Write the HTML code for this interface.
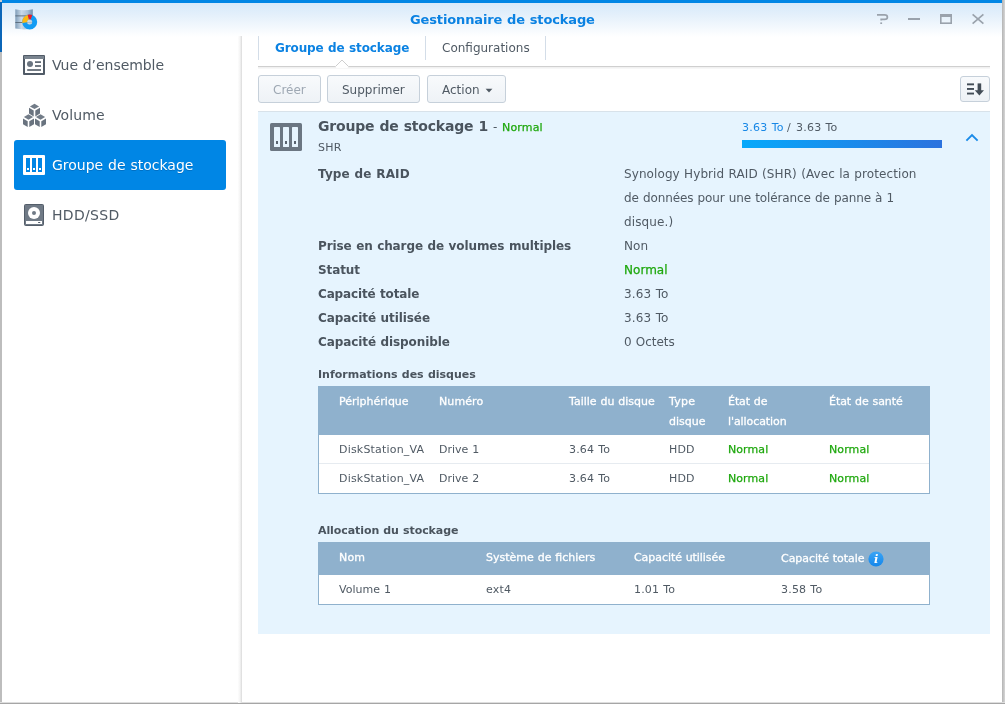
<!DOCTYPE html>
<html lang="fr"><head><meta charset="utf-8"><title>Gestionnaire de stockage</title>
<style>
html,body{margin:0;padding:0;}
body{width:1005px;height:704px;overflow:hidden;position:relative;background:#cfcfcf;font-family:"DejaVu Sans","Liberation Sans",sans-serif;font-size:12px;color:#505a64;word-spacing:0.4px;}
.abs,.t,svg{position:absolute;}
.t{white-space:nowrap;line-height:1;}
#win{left:2px;top:0;width:1000px;height:703px;background:#fff;}
#hdr{left:2px;top:3px;width:1000px;height:34px;background:linear-gradient(#d6e9fa 0,#e6f1fb 40%,#ffffff 100%);}
#topbar{left:2px;top:0;width:1000px;height:3px;background:#0086e5;}
#leftblue{left:0;top:2px;width:2px;height:50px;background:#0b66b8;}
#leftgray{left:0;top:52px;width:2px;height:652px;background:#bdbdbd;}
#rightgray{left:1002px;top:0;width:3px;height:704px;background:linear-gradient(90deg,#b4b4b4,#d6d6d6);}
#botgray{left:0;top:702px;width:1005px;height:2px;background:linear-gradient(#dedede 0,#dedede 50%,#a6a6a6 50%);}
#sidediv{left:238px;top:36px;width:4px;height:667px;background:linear-gradient(90deg,#fdfdfd 0,#f6f6f6 40%,#ebebeb 70%,#d9d9d9 100%);}
#active{left:14px;top:140px;width:212px;height:50px;background:#0086e5;border-radius:3px;}
.side{font-size:14px;color:#505a64;left:52px;}
.b{font-weight:bold;}
#panel{left:258px;top:111px;width:732px;height:523px;background:#e6f4fe;border-top:1px solid #d8e2ea;box-sizing:border-box;}
#tabline{left:258px;top:66px;width:732px;height:3px;background:linear-gradient(#cfcfcf 0,#cfcfcf 33%,#eeeeee 33%,#fafafa 100%);}
.sep{width:1px;top:36px;height:24px;background:#d3dde8;}
.btn{top:75px;height:26px;border:1px solid #c6d0da;border-radius:3px;background:linear-gradient(#f8fafc,#eef2f6);}
.btn .t{top:8px;font-size:12px;color:#505a64;}
.lbl{font-size:12px;font-weight:bold;color:#4a545e;left:318px;}
.val{font-size:12px;color:#505a64;left:624px;}
.th{font-size:11px;color:#fff;-webkit-text-stroke:0.3px #fff;}
.td{font-size:11px;color:#505a64;}
.g{color:#1fa80e !important;-webkit-text-stroke:0.25px #1fa80e;}
.thead{background:#8fb1cd;}
.tbody{background:#fff;border:1px solid #8fb1cd;border-top:none;box-sizing:border-box;}
#root{position:absolute;left:0;top:0;width:1005px;height:704px;will-change:transform;}
</style></head><body>
<div id="root">
<div id="win" class="abs"></div>
<div id="hdr" class="abs"></div>
<div id="topbar" class="abs"></div>
<div id="leftblue" class="abs"></div>
<div id="leftgray" class="abs"></div>
<div id="rightgray" class="abs"></div>
<div id="botgray" class="abs"></div>
<div id="sidediv" class="abs"></div>

<!-- app icon -->
<svg id="appicon" style="left:14px;top:7px" width="26" height="26" viewBox="0 0 26 26">
<defs><linearGradient id="cyl" x1="0" x2="1" y1="0" y2="0"><stop offset="0" stop-color="#7f9db8"/><stop offset="0.35" stop-color="#c9d9e8"/><stop offset="0.7" stop-color="#a9c0d6"/><stop offset="1" stop-color="#6f8fae"/></linearGradient></defs>
<path d="M1.3 2.2 Q10 4.2 18.8 2.2 L18.8 21.6 Q10 23.2 1.3 21.6 Z" fill="url(#cyl)"/>
<rect x="1.3" y="8.5" width="17.5" height="0.8" fill="#4f5f6f"/>
<rect x="1.3" y="15" width="17.5" height="0.8" fill="#4f5f6f"/>
<circle cx="15.7" cy="15" r="5" fill="none" stroke="#129cf4" stroke-width="5"/>
<path d="M10.74 15.6 A5 5 0 0 1 14.3 10.2" fill="none" stroke="#fdb813" stroke-width="5"/>
<path d="M14.3 10.2 A5 5 0 0 1 17.43 10.31" fill="none" stroke="#ee1c25" stroke-width="5"/>
<circle cx="15.7" cy="15" r="2.5" fill="#e8f1f8" opacity="0.6"/>
</svg>

<span id="title" class="t b" style="left:410px;top:13px;font-size:13px;color:#0b82e2;letter-spacing:-0.13px;">Gestionnaire de stockage</span>

<!-- window controls -->
<svg style="left:870px;top:8px" width="120" height="22" viewBox="0 0 120 22" fill="none" stroke="#9aa2ac" stroke-width="1.8">
<path d="M7 6.9 H14.5 Q17.4 6.9 17.4 9.2 Q17.4 11.4 14.5 11.4 H11.2 V12.6" stroke-width="1.7"/>
<rect x="10.3" y="14.4" width="1.8" height="1.6" fill="#9aa2ac" stroke="none"/>
<path d="M38 11 H50" stroke-width="2"/>
<rect x="70.8" y="7.4" width="10.4" height="7.8" stroke-width="1.6"/>
<rect x="70" y="6" width="12" height="3" fill="#9aa2ac" stroke="none"/>
<path d="M102.6 6.4 L113.4 15.6 M113.4 6.4 L102.6 15.6" stroke-width="1.7"/>
</svg>

<!-- sidebar -->
<div id="active" class="abs"></div>
<svg style="left:23px;top:55px" width="22" height="20" viewBox="0 0 22 20">
<rect x="0" y="0" width="22" height="20" rx="1" fill="#515b67"/>
<rect x="1" y="1" width="20" height="3" fill="#7a848f"/>
<rect x="2" y="4" width="18" height="14" fill="#fff"/>
<circle cx="7" cy="9" r="3" fill="#6b7581"/>
<rect x="12" y="6.3" width="6" height="1.6" fill="#515b67"/>
<rect x="12" y="10.2" width="6" height="1.6" fill="#515b67"/>
<rect x="4.2" y="14.2" width="13.8" height="1.6" fill="#515b67"/>
</svg>
<svg style="left:23px;top:103px" width="24" height="25" viewBox="0 0 24 25">
<defs><g id="cube"><path d="M5.5 0 L10.1 2.7 L5.5 5.4 L0.9 2.7 Z" fill="#727c88"/><path d="M0 4.1 L4.7 6.9 L4.7 12.7 L0 9.9 Z" fill="#69737f"/><path d="M6.3 6.9 L11 4.1 L11 9.9 L6.3 12.7 Z" fill="#69737f"/></g></defs>
<use href="#cube" x="6" y="0.7"/><use href="#cube" x="0" y="11.3"/><use href="#cube" x="12" y="11.3"/>
</svg>
<svg style="left:23px;top:155px" width="22" height="20" viewBox="0 0 22 20">
<rect x="0" y="0" width="22" height="20" rx="1" fill="#fff"/>
<rect x="3" y="3" width="4" height="14" fill="#0086e5"/><rect x="9" y="3" width="4" height="14" fill="#0086e5"/><rect x="15" y="3" width="4" height="14" fill="#0086e5"/>
<rect x="4" y="13" width="2" height="2" fill="#fff"/><rect x="10" y="13" width="2" height="2" fill="#fff"/><rect x="16" y="13" width="2" height="2" fill="#fff"/>
</svg>
<svg style="left:24px;top:204px" width="20" height="22" viewBox="0 0 20 22">
<rect x="0.5" y="0.5" width="19" height="21" rx="1" fill="#707a86" stroke="#545e6a"/>
<circle cx="10" cy="9" r="6" fill="#fff"/><circle cx="10" cy="9" r="2" fill="#707a86"/>
<rect x="2" y="17" width="16" height="3" fill="#fff"/><rect x="14" y="18" width="2.4" height="1" rx="0.5" fill="#545e6a"/>
</svg>
<span id="s1" class="t side" style="top:58px;letter-spacing:-0.05px;">Vue d’ensemble</span>
<span id="s2" class="t side" style="top:108px;letter-spacing:0.10px;">Volume</span>
<span id="s3" class="t side" style="top:158px;color:#fff;text-shadow:0 1px 0 #0070c4;">Groupe de stockage</span>
<span id="s4" class="t side" style="top:208px;letter-spacing:0.33px;">HDD/SSD</span>

<!-- tabs -->
<div class="abs sep" style="left:258px"></div>
<div class="abs sep" style="left:425px"></div>
<div class="abs sep" style="left:545px"></div>
<div id="tabline" class="abs"></div>
<svg style="left:335px;top:59px" width="14" height="9" viewBox="0 0 14 9"><path d="M0 8 L7 1 L14 8 Z" fill="#fff"/><path d="M0.5 7.5 L7 1 L13.5 7.5" fill="none" stroke="#cfcfcf" stroke-width="1"/><rect x="1.2" y="7.5" width="11.6" height="1.5" fill="#fff"/></svg>
<span id="tab1" class="t b" style="left:275px;top:42px;font-size:12px;color:#0b82e2;letter-spacing:-0.11px;">Groupe de stockage</span>
<span id="tab2" class="t" style="left:442px;top:42px;font-size:12px;color:#505a64;">Configurations</span>

<!-- toolbar -->
<div id="b1" class="abs btn" style="left:258px;width:61px;"><span class="t" style="left:14px;color:#9ea8b3;">Créer</span></div>
<div id="b2" class="abs btn" style="left:327px;width:91px;"><span class="t" style="left:14px;">Supprimer</span></div>
<div id="b3" class="abs btn" style="left:427px;width:77px;"><span class="t" style="left:14px;">Action</span>
<svg style="left:57px;top:12px" width="8" height="5" viewBox="0 0 8 5"><path d="M0.6 0.8 H7.4 L4 4.4 Z" fill="#505a64"/></svg></div>
<div id="b4" class="abs btn" style="left:960px;width:28px;top:76px;height:24px;">
<svg style="left:5px;top:6px" width="20" height="14" viewBox="0 0 20 14" fill="#434d57"><rect x="1" y="0.4" width="7" height="1.9"/><rect x="1" y="5" width="7" height="1.9"/><rect x="1" y="9.6" width="7" height="1.9"/><rect x="11.6" y="0.4" width="3.6" height="8"/><path d="M8.8 7.2 H18 L13.4 12.4 Z"/></svg></div>

<!-- panel -->
<div id="panel" class="abs"></div>
<svg style="left:270px;top:123px" width="32" height="28" viewBox="0 0 32 28">
<rect width="32" height="28" rx="1.6" fill="#6b7682"/>
<rect x="4" y="4" width="6" height="20" rx="0.6" fill="#e6f4fe"/><rect x="13" y="4" width="6" height="20" rx="0.6" fill="#e6f4fe"/><rect x="22" y="4" width="6" height="20" rx="0.6" fill="#e6f4fe"/>
<rect x="6" y="18" width="2" height="3" fill="#59636f"/><rect x="15" y="18" width="2" height="3" fill="#59636f"/><rect x="24" y="18" width="2" height="3" fill="#59636f"/>
</svg>
<span id="h1" class="t b" style="left:318px;top:119px;font-size:14px;color:#4a545e;letter-spacing:-0.19px;">Groupe de stockage 1</span>
<span id="h1b" class="t" style="left:493px;top:121px;font-size:12px;color:#505a64;">-</span>
<span id="h1c" class="t g" style="left:502px;top:122px;font-size:11px;letter-spacing:0.16px;">Normal</span>
<span id="shr" class="t" style="left:318px;top:142px;font-size:11px;letter-spacing:0.26px;">SHR</span>
<span id="cap1" class="t" style="left:742px;top:122px;font-size:11px;color:#1787e6;letter-spacing:0.25px;">3.63 To</span>
<span id="cap2" class="t" style="left:787px;top:122px;font-size:11px;">/</span>
<span id="cap3" class="t" style="left:796px;top:122px;font-size:11px;letter-spacing:0.22px;">3.63 To</span>
<div id="bar" class="abs" style="left:742px;top:140px;width:200px;height:8px;background:linear-gradient(90deg,#06a9fb,#2c72de);"></div>
<svg style="left:964px;top:132px" width="16" height="11" viewBox="0 0 16 11"><path d="M2.4 8.6 L8 3 L13.6 8.6" fill="none" stroke="#1a8be8" stroke-width="1.9"/></svg>

<span id="l1" class="t lbl" style="top:168px;letter-spacing:0.14px;">Type de RAID</span>
<span id="l2" class="t lbl" style="top:240px;letter-spacing:-0.09px;">Prise en charge de volumes multiples</span>
<span id="l3" class="t lbl" style="top:264px;letter-spacing:-0.10px;">Statut</span>
<span id="l4" class="t lbl" style="top:288px;letter-spacing:-0.14px;">Capacité totale</span>
<span id="l5" class="t lbl" style="top:312px;letter-spacing:-0.08px;">Capacité utilisée</span>
<span id="l6" class="t lbl" style="top:336px;letter-spacing:-0.09px;">Capacité disponible</span>
<span id="v1a" class="t val" style="top:168px;letter-spacing:0.09px;">Synology Hybrid RAID (SHR) (Avec la protection</span>
<span id="v1b" class="t val" style="top:192px;letter-spacing:-0.10px;">de données pour une tolérance de panne à 1</span>
<span id="v1c" class="t val" style="top:216px;letter-spacing:0.11px;">disque.)</span>
<span id="v2" class="t val" style="top:240px;letter-spacing:0.12px;">Non</span>
<span id="v3" class="t val g" style="top:264px;letter-spacing:0.03px;">Normal</span>
<span id="v4" class="t val" style="top:288px;letter-spacing:0.15px;">3.63 To</span>
<span id="v5" class="t val" style="top:312px;letter-spacing:0.15px;">3.63 To</span>
<span id="v6" class="t val" style="top:336px;letter-spacing:-0.04px;">0 Octets</span>

<span id="sec1" class="t b" style="left:318px;top:369px;font-size:11px;color:#4a545e;">Informations des disques</span>
<div id="th1" class="abs thead" style="left:318px;top:386px;width:612px;height:49px;"></div>
<div id="tb1" class="abs tbody" style="left:318px;top:435px;width:612px;height:59px;"></div>
<div class="abs" style="left:319px;top:463px;width:610px;height:1px;background:#e6ebf0;"></div>
<span id="c1" class="t th" style="left:339px;top:396px;">Périphérique</span>
<span id="c2" class="t th" style="left:439px;top:396px;letter-spacing:0.10px;">Numéro</span>
<span id="c3" class="t th" style="left:569px;top:396px;">Taille du disque</span>
<span id="c4" class="t th" style="left:669px;top:396px;letter-spacing:0.21px;">Type</span>
<span id="c4b" class="t th" style="left:669px;top:416px;letter-spacing:0.03px;">disque</span>
<span id="c5" class="t th" style="left:728px;top:396px;letter-spacing:-0.07px;">État de</span>
<span id="c5b" class="t th" style="left:728px;top:416px;letter-spacing:-0.08px;">l'allocation</span>
<span id="c6" class="t th" style="left:829px;top:396px;letter-spacing:-0.05px;">État de santé</span>

<span id="r1a" class="t td" style="left:339px;top:444px;letter-spacing:0.19px;">DiskStation_VA</span>
<span id="r1b" class="t td" style="left:439px;top:444px;">Drive 1</span>
<span id="r1c" class="t td" style="left:569px;top:444px;letter-spacing:0.17px;">3.64 To</span>
<span id="r1d" class="t td" style="left:669px;top:444px;letter-spacing:0.16px;">HDD</span>
<span id="r1e" class="t td g" style="left:728px;top:444px;letter-spacing:0.08px;">Normal</span>
<span id="r1f" class="t td g" style="left:829px;top:444px;letter-spacing:0.10px;">Normal</span>
<span id="r2a" class="t td" style="left:339px;top:473px;letter-spacing:0.19px;">DiskStation_VA</span>
<span id="r2b" class="t td" style="left:439px;top:473px;">Drive 2</span>
<span id="r2c" class="t td" style="left:569px;top:473px;letter-spacing:0.17px;">3.64 To</span>
<span id="r2d" class="t td" style="left:669px;top:473px;letter-spacing:0.16px;">HDD</span>
<span id="r2e" class="t td g" style="left:728px;top:473px;letter-spacing:0.08px;">Normal</span>
<span id="r2f" class="t td g" style="left:829px;top:473px;letter-spacing:0.10px;">Normal</span>

<span id="sec2" class="t b" style="left:318px;top:525px;font-size:11px;color:#4a545e;letter-spacing:-0.08px;">Allocation du stockage</span>
<div id="th2" class="abs thead" style="left:318px;top:542px;width:612px;height:33px;"></div>
<div id="tb2" class="abs tbody" style="left:318px;top:575px;width:612px;height:30px;"></div>
<span id="d1" class="t th" style="left:339px;top:552px;letter-spacing:0.20px;">Nom</span>
<span id="d2" class="t th" style="left:486px;top:552px;">Système de fichiers</span>
<span id="d3" class="t th" style="left:634px;top:552px;letter-spacing:-0.06px;">Capacité utilisée</span>
<span id="d4" class="t th" style="left:781px;top:553px;letter-spacing:-0.05px;">Capacité totale</span>
<svg style="left:868px;top:551px" width="16" height="16" viewBox="0 0 16 16"><defs><linearGradient id="ig" x1="0" x2="0" y1="0" y2="1"><stop offset="0" stop-color="#3aa5f6"/><stop offset="1" stop-color="#1486ea"/></linearGradient></defs><circle cx="8" cy="8" r="7.6" fill="url(#ig)"/><text x="8.2" y="12" text-anchor="middle" font-family="DejaVu Serif, Liberation Serif, serif" font-style="italic" font-weight="bold" font-size="11.5" fill="#fff">i</text></svg>
<span id="e1" class="t td" style="left:339px;top:584px;letter-spacing:0.04px;">Volume 1</span>
<span id="e2" class="t td" style="left:486px;top:584px;letter-spacing:0.22px;">ext4</span>
<span id="e3" class="t td" style="left:634px;top:584px;letter-spacing:0.17px;">1.01 To</span>
<span id="e4" class="t td" style="left:781px;top:584px;letter-spacing:0.19px;">3.58 To</span>
</div>
</body></html>
